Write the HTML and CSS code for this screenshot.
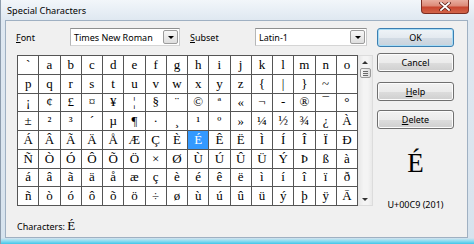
FILE: index.html
```html
<!DOCTYPE html>
<html lang="en">
<head>
	<meta charset="UTF-8">
	<title>Special Characters</title>
	<link rel="stylesheet" href="styles.css">
</head>
<body>
	<div class="window">
		<div class="titlebar">
			<span class="title">Special Characters</span>
			<a class="close" href="#">
				<svg width="12" height="9" viewBox="0 0 12 9">
					<path d="M2 1 L10 8 M10 1 L2 8" stroke="#5a1c14" stroke-width="3.2" stroke-linecap="square"/>
					<path d="M2 1 L10 8 M10 1 L2 8" stroke="#fff" stroke-width="1.8" stroke-linecap="square"/>
				</svg>
			</a>
		</div>
		<div class="client">
			<div class="left">
				<div class="toprow">
					<span class="lbl font-lbl"><u>F</u>ont</span>
					<div class="combo font-combo"><span>Times New Roman</span><i class="drop"></i></div>
					<span class="lbl subset-lbl"><u>S</u>ubset</span>
					<div class="combo subset-combo"><span>Latin-1</span><i class="drop"></i></div>
				</div>
				<div class="charview">
					<div class="chars">
						<span>`</span><span>a</span><span>b</span><span>c</span><span>d</span><span>e</span><span>f</span><span>g</span><span>h</span><span>i</span><span>j</span><span>k</span><span>l</span><span>m</span><span>n</span><span>o</span>
						<span>p</span><span>q</span><span>r</span><span>s</span><span>t</span><span>u</span><span>v</span><span>w</span><span>x</span><span>y</span><span>z</span><span>{</span><span>|</span><span>}</span><span>~</span><span></span>
						<span>¡</span><span>¢</span><span>£</span><span>¤</span><span>¥</span><span>¦</span><span>§</span><span>¨</span><span>©</span><span>ª</span><span>«</span><span>¬</span><span>-</span><span>®</span><span>¯</span><span>°</span>
						<span>±</span><span>²</span><span>³</span><span>´</span><span>µ</span><span>¶</span><span>·</span><span>¸</span><span>¹</span><span>º</span><span>»</span><span>¼</span><span>½</span><span>¾</span><span>¿</span><span>À</span>
						<span>Á</span><span>Â</span><span>Ã</span><span>Ä</span><span>Å</span><span>Æ</span><span>Ç</span><span>È</span><span class="sel">É</span><span>Ê</span><span>Ë</span><span>Ì</span><span>Í</span><span>Î</span><span>Ï</span><span>Ð</span>
						<span>Ñ</span><span>Ò</span><span>Ó</span><span>Ô</span><span>Õ</span><span>Ö</span><span>×</span><span>Ø</span><span>Ù</span><span>Ú</span><span>Û</span><span>Ü</span><span>Ý</span><span>Þ</span><span>ß</span><span>à</span>
						<span>á</span><span>â</span><span>ã</span><span>ä</span><span>å</span><span>æ</span><span>ç</span><span>è</span><span>é</span><span>ê</span><span>ë</span><span>ì</span><span>í</span><span>î</span><span>ï</span><span>ð</span>
						<span>ñ</span><span>ò</span><span>ó</span><span>ô</span><span>õ</span><span>ö</span><span>÷</span><span>ø</span><span>ù</span><span>ú</span><span>û</span><span>ü</span><span>ý</span><span>þ</span><span>ÿ</span><span>Ā</span>
					</div>
					<div class="scrollbar">
						<i class="arrow up"></i>
						<div class="thumb"><b></b><b></b><b></b></div>
						<i class="arrow down"></i>
					</div>
				</div>
				<div class="picked">Characters: <span class="serif">É</span></div>
			</div>
			<div class="right">
				<a class="btn default" href="#">OK</a>
				<a class="btn cancel" href="#">Cancel</a>
				<a class="btn help" href="#"><u>H</u>elp</a>
				<a class="btn delete" href="#"><u>D</u>elete</a>
				<div class="preview">É</div>
				<div class="code">U+00C9 (201)</div>
			</div>
		</div>
	</div>
</body>
</html>
```

FILE: styles.css
```css
* {
	box-sizing: border-box;
}

html,
body {
	margin: 0;
	padding: 0;
}

body {
	font-family: "Noto Sans", "Open Sans", sans-serif;
	font-size: 9px;
	color: #000;
}

.window {
	width: 474px;
	height: 244px;
	display: flex;
	flex-direction: column;
	border-left: 1px solid #8d9cad;
	background: linear-gradient(to bottom, #f2f6fa 0, #dfe8f1 20px, #d9e4ee 200px, #d6e3ee 238px, #8fdcf0 241px, #3fc6ea 244px);
}

.titlebar {
	height: 20px;
	display: flex;
	justify-content: space-between;
	align-items: flex-start;
	padding-left: 6px;
}

.title {
	line-height: 22px;
	font-size: 9.2px;
}

.close {
	width: 48px;
	height: 14px;
	margin-right: 5px;
	display: flex;
	align-items: center;
	justify-content: center;
	border: 1px solid #7b2d22;
	border-top: none;
	border-radius: 0 0 4px 4px;
	background: linear-gradient(to bottom, #e9ad9f 0, #dc8a78 45%, #c8452f 55%, #d2654a 100%);
}

.client {
	flex: 1;
	display: flex;
	margin: 0 6px 6px 4px;
	border: 1px solid #9fb0c2;
	background: #f0f0f0;
}

.left {
	width: 367px;
	padding: 7px 0 0 11px;
}

.toprow {
	display: flex;
	align-items: center;
	height: 18px;
}

.lbl u,
.btn u {
	text-decoration: underline;
}

.font-lbl {
	width: 54px;
	margin-left: -1px;
}

.subset-lbl {
	width: 65px;
	margin-left: 10px;
}

.combo {
	height: 18px;
	display: flex;
	align-items: center;
	justify-content: space-between;
	padding: 1px 1px 1px 3px;
	border: 1px solid #8e8f8f;
	border-color: #8e8f8f #c9cacb #d5d5d5 #b5b6b7;
	background: #fff;
}

.font-combo {
	width: 110px;
}

.subset-combo {
	width: 112px;
}

.drop {
	width: 15px;
	height: 14px;
	display: flex;
	align-items: center;
	justify-content: center;
	border: 1px solid #9c9c9c;
	border-radius: 2px;
	background: linear-gradient(to bottom, #f7f7f7, #dedede);
}

.drop::after {
	content: "";
	border-top: 3px solid #000;
	border-left: 3px solid transparent;
	border-right: 3px solid transparent;
}

.charview {
	display: flex;
	height: 151px;
	margin-top: 9px;
}

.chars {
	width: 341px;
	display: grid;
	grid-template-columns: repeat(16, 1fr);
	grid-template-rows: repeat(8, 1fr);
	gap: 1px;
	border: 1px solid #555;
	background: #555;
	font-family: "Liberation Serif", serif;
	font-size: 13px;
}

.chars span {
	display: flex;
	align-items: center;
	justify-content: center;
	background: #fff;
}

.chars .sel {
	background: #3399ff;
	color: #fff;
}

.scrollbar {
	width: 15px;
	display: flex;
	flex-direction: column;
	align-items: center;
	border: 1px solid #dcdcdc;
	border-left: none;
	background: linear-gradient(to right, #e6e6e6, #f4f4f4 40%, #f4f4f4 70%, #e9e9e9);
}

.arrow {
	margin: 5px 0 4px;
	border-left: 3px solid transparent;
	border-right: 3px solid transparent;
}

.arrow.up {
	border-bottom: 3px solid #333;
}

.arrow.down {
	margin-top: auto;
	border-top: 3px solid #333;
}

.thumb {
	width: 11px;
	height: 10px;
	display: flex;
	flex-direction: column;
	justify-content: center;
	align-items: center;
	gap: 1px;
	border: 1px solid #9a9a9a;
	border-radius: 2px;
	background: linear-gradient(to right, #f6f6f6, #dcdcdc);
}

.thumb b {
	width: 5px;
	height: 1px;
	background: #6a6a6a;
}

.picked {
	margin-top: 13px;
	line-height: 14px;
}

.serif {
	font-family: "Liberation Serif", serif;
	font-size: 13px;
}

.right {
	width: 77px;
	margin-left: 4px;
	padding-top: 7px;
	display: flex;
	flex-direction: column;
	align-items: center;
}

.btn {
	width: 77px;
	height: 19px;
	display: flex;
	align-items: center;
	justify-content: center;
	color: #000;
	text-decoration: none;
	border: 1px solid #707070;
	border-radius: 3px;
	background: linear-gradient(to bottom, #f2f2f2 0, #ebebeb 50%, #dddddd 51%, #cfcfcf 100%);
	box-shadow: inset 0 0 0 1px #fcfcfc;
}

.btn.default {
	border-color: #3c7fb1;
	box-shadow: inset 0 0 0 1px #a6dcf6;
	background: linear-gradient(to bottom, #eff4f8 0, #e4eaf0 50%, #d3dce5 51%, #c8d2dc 100%);
}

.cancel {
	margin-top: 6px;
}

.help {
	margin-top: 10px;
}

.delete {
	margin-top: 9px;
}

.preview {
	margin-top: 16px;
	font-family: "Liberation Serif", serif;
	font-size: 27px;
	line-height: 36px;
}

.code {
	margin-top: 17px;
}
```
